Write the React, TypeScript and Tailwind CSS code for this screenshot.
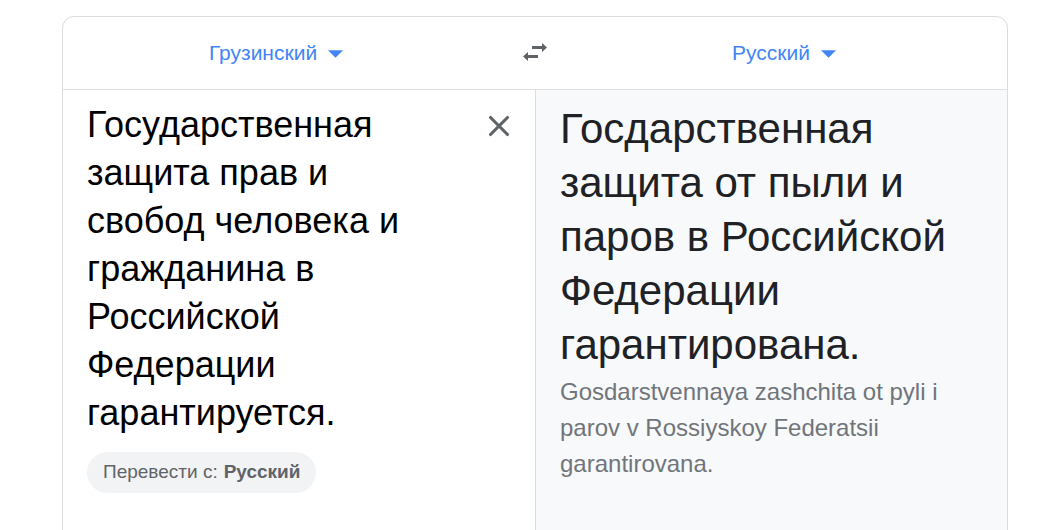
import { X } from "lucide-react";

const font = { fontFamily: '"Liberation Sans", Arial, sans-serif' };

const Caret = () => (
  <svg width="15" height="8" viewBox="0 0 14 7" className="ml-[11px] mt-[2px]">
    <path d="M0 0 L14 0 L7 7 Z" fill="#4285f4" />
  </svg>
);

export default function App() {
  return (
    <div className="w-[1044px] h-[530px] bg-white overflow-hidden pt-4 pl-[62px]" style={font}>
      <div className="w-[946px] h-[540px] border border-[#dadce0] rounded-xl flex flex-col overflow-hidden">
        <div className="h-[73px] flex items-center border-b border-[#e0e0e0] shrink-0">
          <div className="w-[452px] flex justify-center items-center text-[21px] text-[#4285f4] pr-[26px]">
            Грузинский
            <Caret />
          </div>
          <div className="w-[40px] flex justify-center items-center mt-[-2px]">
            <svg width="32" height="24" viewBox="0 0 32 24">
              <path d="M13 6 L23 6 L23 3 L28 7.5 L23 12 L23 9 L13 9 Z" fill="#5f6368" />
              <path d="M19 15 L9 15 L9 12 L4 16.5 L9 21 L9 18 L19 18 Z" fill="#5f6368" />
            </svg>
          </div>
          <div className="flex-1 flex justify-center items-center text-[21px] text-[#4285f4] pl-[6px]">
            Русский
            <Caret />
          </div>
        </div>
        <div className="flex flex-1">
          <div className="w-[472px] shrink-0 flex pl-6 pr-3 pt-[11px]">
            <div className="flex-1 flex flex-col">
              <div className="w-[360px] text-[36px] leading-[48px] text-black">
                Государственная защита прав и свобод человека и гражданина в Российской Федерации гарантируется.
              </div>
              <div className="mt-[15px] self-start h-[41px] rounded-full bg-[#f1f3f4] px-[16px] flex items-center text-[19px] text-[#5f6368]">
                Перевести с:<span className="ml-[6px] font-bold">Русский</span>
              </div>
            </div>
            <div className="pt-[8px] pr-[7px]">
              <X size={34} strokeWidth={2.2} color="#5f6368" />
            </div>
          </div>
          <div className="flex-1 bg-[#f8f9fa] border-l border-[#dadce0] pl-6 pr-6 pt-[12px]">
            <div className="w-[410px] text-[42px] leading-[54px] text-[#202124]">
              Госдарственная защита от пыли и паров в Российской Федерации гарантирована.
            </div>
            <div className="text-[24px] leading-[36px] text-[#70757a] mt-[2px] w-[400px]">
              Gosdarstvennaya zashchita ot pyli i parov v Rossiyskoy Federatsii garantirovana.
            </div>
          </div>
        </div>
      </div>
    </div>
  );
}
